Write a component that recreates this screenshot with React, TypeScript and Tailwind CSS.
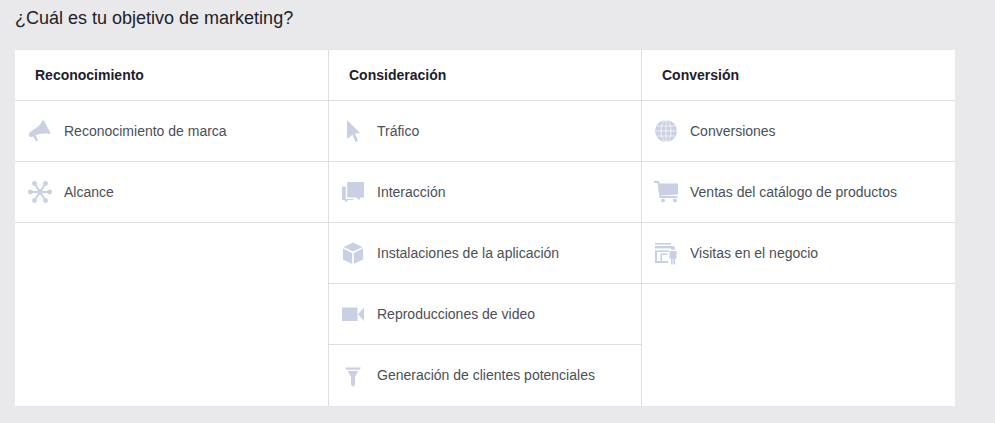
import React from "react";

const iconClass = "w-6 h-6 text-[#c9d0e4] shrink-0";

function Megaphone() {
  return (
    <svg viewBox="0 0 24 24" className={iconClass} fill="currentColor">
      <path d="M14.5 1.5 L16 1.5 L22.5 14 L21.5 15 C17 14.2 12.5 14.6 8 16 L5.5 10.5 C9 8.5 12.5 6 14.5 1.5 Z" />
      <path d="M6 10.2 L8.6 16 L3.8 18 C2 18.4 0.8 17.4 0.8 16 C0.8 14.6 1.6 13.4 2.8 12.6 Z" />
      <path d="M5 17.5 L7.8 16.5 L10 21.2 C10.2 22.3 8.2 22.7 7.8 21.7 Z" />
    </svg>
  );
}

function Nodes() {
  return (
    <svg viewBox="0 0 24 24" className={iconClass} fill="currentColor" stroke="currentColor">
      <path d="M12 12 L6.5 3.5 M12 12 L17.5 3.5 M12 12 L6.5 20.5 M12 12 L17.5 20.5 M12 12 L2 12 M12 12 L22 12" strokeWidth="1.8" />
      <circle cx="6.5" cy="3.5" r="2.4" stroke="none" />
      <circle cx="17.5" cy="3.5" r="2.4" stroke="none" />
      <circle cx="6.5" cy="20.5" r="2.4" stroke="none" />
      <circle cx="17.5" cy="20.5" r="2.4" stroke="none" />
      <circle cx="2.4" cy="12" r="2.4" stroke="none" />
      <circle cx="21.6" cy="12" r="2.4" stroke="none" />
      <circle cx="12" cy="12" r="2.6" stroke="none" />
    </svg>
  );
}

function Pointer() {
  return (
    <svg viewBox="0 0 24 24" className={iconClass} fill="currentColor">
      <path d="M6 1 L19 14 L14 14.6 L17 21.8 L14.6 23 L11.4 15.8 L6 20 Z" />
    </svg>
  );
}

function Chat() {
  return (
    <svg viewBox="0 0 24 24" className={iconClass} fill="currentColor">
      <path d="M6.2 2 H23 V17.5 H20 L17.8 20 L15.5 17.5 H6.2 Z" />
      <path d="M1 6.5 H4.8 V19 H13 L12 20 H7 L4.5 22.5 L3.8 20 H1 Z" />
    </svg>
  );
}

function Box() {
  return (
    <svg viewBox="0 0 24 24" className={iconClass} fill="currentColor">
      <path d="M12 1.5 L21.5 6 L12 10.5 L2.5 6 Z" />
      <path d="M2 7.6 L11.2 12 V23 L2 18.5 Z" />
      <path d="M22 7.6 L12.8 12 V23 L22 18.5 Z" />
    </svg>
  );
}

function Video() {
  return (
    <svg viewBox="0 0 24 24" className={iconClass} fill="currentColor">
      <rect x="1" y="5.5" width="15.5" height="13.5" />
      <path d="M23 5.5 V19 L17 12.2 Z" />
    </svg>
  );
}

function Funnel() {
  return (
    <svg viewBox="0 0 24 24" className={iconClass} fill="currentColor">
      <path d="M4 3.5 H20 L18.6 5.8 H5.4 Z" />
      <path d="M6.6 7 H17.4 L14 13 V20.5 L12 23 L10 20.5 V13 Z" />
    </svg>
  );
}

function Globe() {
  return (
    <svg viewBox="0 0 24 24" className={iconClass} fill="none">
      <circle cx="12" cy="12" r="10.8" fill="currentColor" />
      <g stroke="#ffffff" strokeWidth="0.7">
        <ellipse cx="12" cy="12" rx="5" ry="10.8" />
        <path d="M12 1.2 V22.8 M1.2 12 H22.8 M2.6 7 H21.4 M2.6 17 H21.4" />
      </g>
    </svg>
  );
}

function Cart() {
  return (
    <svg viewBox="0 0 24 24" className={iconClass} fill="currentColor">
      <path d="M0 1 H5 L7 16 H23.5 V18 H5.5 L3.5 3 H0 Z" />
      <path d="M4.5 3.5 H24 V14.5 L6.5 15.5 Z" />
      <circle cx="9" cy="20.6" r="2" />
      <circle cx="21" cy="20.6" r="2" />
    </svg>
  );
}

function Store() {
  return (
    <svg viewBox="0 0 24 24" className={iconClass} fill="currentColor">
      <rect x="1" y="2" width="16" height="1.6" />
      <rect x="1" y="5" width="17" height="2.4" />
      <rect x="1" y="9.4" width="14" height="1.6" />
      <path d="M1 11 H3 V20 H6.5 V12.5 H13.5 V14 H8 V20 H14 V22 H1 Z" />
      <circle cx="19" cy="7" r="2.1" />
      <path d="M15.5 10 H22.5 V17.5 H21 V23.5 H19.4 V18 H18.6 V23.5 H17 V17.5 H15.5 Z" />
    </svg>
  );
}

type Item = { label: string; icon: React.ReactNode };

const columns: { title: string; pad: string; items: Item[] }[] = [
  {
    title: "Reconocimiento",
    pad: "pl-[13px]",
    items: [
      { label: "Reconocimiento de marca", icon: <Megaphone /> },
      { label: "Alcance", icon: <Nodes /> },
    ],
  },
  {
    title: "Consideración",
    pad: "pl-3",
    items: [
      { label: "Tráfico", icon: <Pointer /> },
      { label: "Interacción", icon: <Chat /> },
      { label: "Instalaciones de la aplicación", icon: <Box /> },
      { label: "Reproducciones de video", icon: <Video /> },
      { label: "Generación de clientes potenciales", icon: <Funnel /> },
    ],
  },
  {
    title: "Conversión",
    pad: "pl-3",
    items: [
      { label: "Conversiones", icon: <Globe /> },
      { label: "Ventas del catálogo de productos", icon: <Cart /> },
      { label: "Visitas en el negocio", icon: <Store /> },
    ],
  },
];

export default function App() {
  return (
    <div className="h-[423px] bg-[#e9e9eb] pl-[15px] overflow-hidden font-['Liberation_Sans',Arial,sans-serif]">
      <h1 className="h-[50px] pt-[7px] text-[18px] leading-[22px] text-[#1d2129]">¿Cuál es tu objetivo de marketing?</h1>
      <div className="grid grid-cols-[314px_313px_313px] w-[940px] h-[356px] bg-white">
        {columns.map((col, i) => (
          <div key={col.title} className={i < 2 ? "border-r border-[#dddfe2]" : ""}>
            <div className="h-[51px] border-b border-[#dddfe2] pl-5 flex items-center text-[14px] font-bold text-[#1d2129]">
              {col.title}
            </div>
            {col.items.map((item, n) => (
              <div
                key={item.label}
                className={
                  "h-[61px] flex items-center gap-3 text-[14px] text-[#4b4f56] " +
                  col.pad +
                  (n === 4 ? "" : " border-b border-[#dddfe2]")
                }
              >
                {item.icon}
                <span>{item.label}</span>
              </div>
            ))}
          </div>
        ))}
      </div>
    </div>
  );
}
